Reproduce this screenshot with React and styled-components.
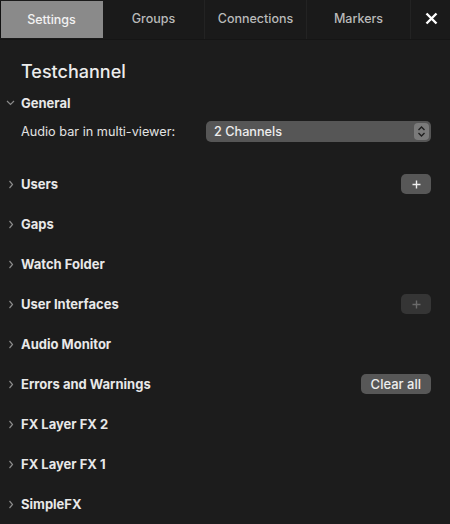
import styled, { createGlobalStyle } from "styled-components";

const GlobalStyle = createGlobalStyle`
  html, body {
    margin: 0;
    padding: 0;
    background: #1c1c1c;
  }
  body {
    font-family: Inter, "Liberation Sans", sans-serif;
    -webkit-font-smoothing: antialiased;
  }
`;

const Panel = styled.div`
  width: 450px;
  height: 524px;
  background: #1c1c1c;
  color: #e6e6e6;
  overflow: hidden;
  display: flex;
  flex-direction: column;
`;

const TabBar = styled.div`
  display: grid;
  grid-template-columns: 103px 102px 102px 104px 1fr;
  height: 39px;
  border-bottom: 1px solid #151515;
  background: #1a1a1a;
`;

const Tab = styled.div`
  display: flex;
  justify-content: center;
  align-items: center;
  padding-bottom: ${(p) => (p.$active ? "1px" : "3px")};
  margin: ${(p) => (p.$active ? "1px 0 1px 0" : "0")};
  border-right: 1px solid ${(p) => (p.$active ? "transparent" : "#232323")};
  border-left: ${(p) => (p.$active ? "1px solid #111" : "0")};

  background: ${(p) => (p.$active ? "#8a8a8a" : "transparent")};
  color: ${(p) => (p.$active ? "#f2f2f2" : "#b9b9b9")};
  font-size: 12.5px;
  font-weight: 500;
`;

const CloseTab = styled.div`
  display: flex;
  justify-content: center;
  align-items: center;
  padding: 0 0 2px 2px;
  color: #ffffff;
`;

const Body = styled.div`
  display: flex;
  flex-direction: column;
  padding-top: 20px;
`;

const Title = styled.div`
  padding: 0 21px;
  height: 24px;
  line-height: 24px;
  font-size: 18px;
  font-weight: 500;
  color: #ececec;
`;

const SectionHeader = styled.div`
  display: flex;
  align-items: center;
  justify-content: space-between;
  height: ${(p) => (p.$open ? "24px" : "40px")};
  margin-top: ${(p) => (p.$open ? "7px" : "0")};
  padding: 0 19px 0 0;
`;

const Label = styled.div`
  display: flex;
  align-items: center;
`;

const Chevron = styled.span`
  display: flex;
  justify-content: center;
  width: 21px;
`;

const SectionName = styled.span`
  font-size: 13px;
  font-weight: 700;
  color: #e8e8e8;
`;

const SectionBody = styled.div`
  padding: 4px 19px 21px 21px;
`;

const FieldRow = styled.div`
  display: flex;
  align-items: center;
  height: 24px;
  font-size: 12.7px;
  color: #e2e2e2;
`;

const FieldLabel = styled.span`
  width: 185px;
`;

const Select = styled.div`
  flex: 1;
  display: flex;
  align-items: center;
  justify-content: space-between;
  height: 21px;
  padding: 0 2px 0 8px;
  border-radius: 5px;
  background: #565656;
  color: #ededed;
  font-size: 12.7px;
  font-weight: 500;
`;

const Stepper = styled.span`
  display: flex;
  justify-content: center;
  align-items: center;
  width: 15px;
  height: 17px;
  border-radius: 4px;
  background: #7a7a7a;
`;

const SmallButton = styled.div`
  display: flex;
  justify-content: center;
  align-items: center;
  height: 20px;
  min-width: 30px;
  padding: ${(p) => (p.$wide ? "0 10px" : "0")};
  box-sizing: border-box;
  border-radius: 5px;
  background: ${(p) => (p.$disabled ? "#353535" : "#575757")};
  color: ${(p) => (p.$disabled ? "#6e6e6e" : "#eeeeee")};
  font-size: 13px;
  font-weight: 500;
`;

const ChevronIcon = ({ open }) =>
  open ? (
    <svg width="9" height="6" viewBox="0 0 9 6">
      <path d="M1 1 L4.5 4.5 L8 1" fill="none" stroke="#8a8a8a" strokeWidth="1.2" />
    </svg>
  ) : (
    <svg width="6" height="9" viewBox="0 0 6 9">
      <path d="M1.5 1 L4.5 4.5 L1.5 8" fill="none" stroke="#8a8a8a" strokeWidth="1.2" />
    </svg>
  );

const PlusIcon = ({ color }) => (
  <svg width="9" height="9" viewBox="0 0 9 9">
    <path d="M4.5 0.5 V8.5 M0.5 4.5 H8.5" stroke={color} strokeWidth="1.4" />
  </svg>
);

const sections = [
  { name: "Users", action: "add" },
  { name: "Gaps" },
  { name: "Watch Folder" },
  { name: "User Interfaces", action: "addDisabled" },
  { name: "Audio Monitor" },
  { name: "Errors and Warnings", action: "clear" },
  { name: "FX Layer FX 2" },
  { name: "FX Layer FX 1" },
  { name: "SimpleFX" },
];

const App = () => {
  return (
    <Panel>
      <GlobalStyle />
      <TabBar>
        <Tab $active>Settings</Tab>
        <Tab>Groups</Tab>
        <Tab>Connections</Tab>
        <Tab>Markers</Tab>
        <CloseTab>
          <svg width="13" height="13" viewBox="0 0 13 13">
            <path d="M1.5 1.5 L11.5 11.5 M11.5 1.5 L1.5 11.5" stroke="#fff" strokeWidth="2.4" />
          </svg>
        </CloseTab>
      </TabBar>
      <Body>
        <Title>Testchannel</Title>
        <SectionHeader $open>
          <Label>
            <Chevron>
              <ChevronIcon open />
            </Chevron>
            <SectionName>General</SectionName>
          </Label>
        </SectionHeader>
        <SectionBody>
          <FieldRow>
            <FieldLabel>Audio bar in multi-viewer:</FieldLabel>
            <Select>
              2 Channels
              <Stepper>
                <svg width="9" height="13" viewBox="0 0 9 13">
                  <path
                    d="M1.5 5 L4.5 2 L7.5 5 M1.5 8 L4.5 11 L7.5 8"
                    fill="none"
                    stroke="#1e1e1e"
                    strokeWidth="1.4"
                  />
                </svg>
              </Stepper>
            </Select>
          </FieldRow>
        </SectionBody>
        {sections.map((s) => (
          <SectionHeader key={s.name}>
            <Label>
              <Chevron>
                <ChevronIcon />
              </Chevron>
              <SectionName>{s.name}</SectionName>
            </Label>
            {s.action === "add" && (
              <SmallButton>
                <PlusIcon color="#f0f0f0" />
              </SmallButton>
            )}
            {s.action === "addDisabled" && (
              <SmallButton $disabled>
                <PlusIcon color="#6a6a6a" />
              </SmallButton>
            )}
            {s.action === "clear" && <SmallButton $wide>Clear all</SmallButton>}
          </SectionHeader>
        ))}
      </Body>
    </Panel>
  );
};

export default App;
